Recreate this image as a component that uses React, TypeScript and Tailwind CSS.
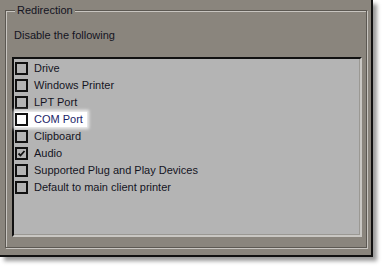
const items = [
  { label: "Drive", checked: false },
  { label: "Windows Printer", checked: false },
  { label: "LPT Port", checked: false },
  { label: "COM Port", checked: false, hot: true },
  { label: "Clipboard", checked: false },
  { label: "Audio", checked: true },
  { label: "Supported Plug and Play Devices", checked: false },
  { label: "Default to main client printer", checked: false },
];

const CheckBox = ({ checked, hot }: { checked: boolean; hot?: boolean }) => (
  <span
    className={
      "flex h-[13px] w-[13px] shrink-0 items-center justify-center border-2 border-[#111]" +
      (hot ? " bg-white" : "")
    }
  >
    {checked ? (
      <svg width="9" height="9" viewBox="0 0 9 9">
        <path d="M1.5 4.5 L3.5 6.5 L7.5 2" stroke="#111" strokeWidth="1.8" fill="none" />
      </svg>
    ) : null}
  </span>
);

export default function App() {
  return (
    <div
      className="h-[267px] w-[384px] bg-white text-[11px] leading-none text-[#14141f]"
      style={{ fontFamily: '"Liberation Sans", Arial, sans-serif' }}
    >
      <div className="h-[257px] w-[373px] border-r-2 border-b-2 border-[#111] bg-[#8a857d] pt-[10px] pl-[5px] shadow-[4px_4px_4px_rgba(0,0,0,0.4)]">
        <div className="relative h-[238px] w-[362px] border border-[#5c5852] shadow-[inset_1px_1px_0_#c8c5c0,1px_1px_0_#c8c5c0]">
          {/* legend */}
          <span className="absolute top-[-6px] left-[9px] bg-[#8a857d] px-[2px]">Redirection</span>

          <div className="pt-[19px] pl-[8px]">Disable the following</div>

          <div className="mt-[16px] ml-[6px] h-[180px] w-[350px] border-2 border-t-[#111] border-l-[#111] border-r-[#c9c7c3] border-b-[#c9c7c3] bg-[#b4b4b4] pt-[1px] pl-[1px] shadow-[inset_-1px_-1px_0_#9a9893]">
            {items.map((it) => (
              <div key={it.label} className="flex h-[17px] items-center">
                {it.hot ? (
                  <div className="flex h-[15px] items-center gap-[6px] bg-white pr-[4px] shadow-[0_0_3px_2px_rgba(255,255,255,0.8)]">
                    <CheckBox checked={it.checked} hot />
                    <span className="text-[#1b2468]">{it.label}</span>
                  </div>
                ) : (
                  <div className="flex items-center gap-[6px]">
                    <CheckBox checked={it.checked} />
                    <span>{it.label}</span>
                  </div>
                )}
              </div>
            ))}
          </div>
        </div>
      </div>
    </div>
  );
}
